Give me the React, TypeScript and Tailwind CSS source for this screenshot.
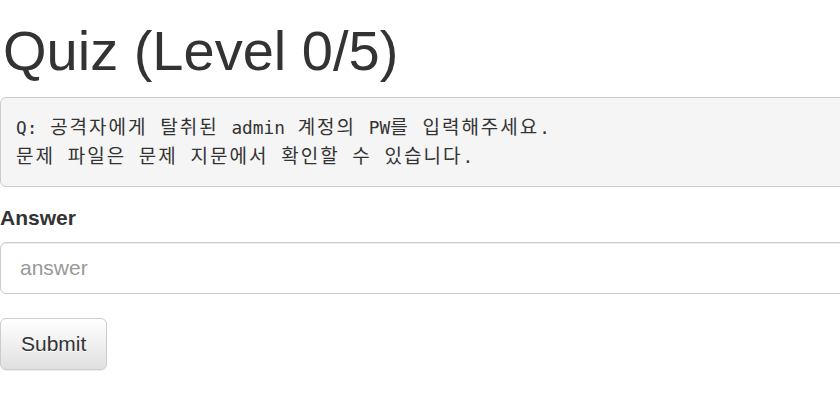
import type { ReactNode } from "react"

function Ko({ children }: { children: ReactNode }) {
  return (
    <span className="font-['Noto_Sans_CJK_KR','Noto_Sans',sans-serif] text-[19px] leading-none tracking-[2px]">
      {children}
    </span>
  )
}

export default function App() {
  return (
    <div className="h-[401px] w-[840px] overflow-hidden bg-white font-['Liberation_Sans',Arial,sans-serif] text-[#333]">
      <div className="w-[1140px] pt-[21px]">
        <h1 className="mb-[16px] pl-[3px] text-[56px] font-normal leading-[60px]">Quiz (Level 0/5)</h1>

        <pre className="mb-[16px] rounded-[6px] border border-[#ccc] bg-[#f5f5f5] px-[15px] py-[15px] font-['DejaVu_Sans_Mono',monospace] text-[17.8px] leading-[29px] text-[#333] [word-spacing:2px]">
          Q: <Ko>공격자에게</Ko> <Ko>탈취된</Ko> admin <Ko>계정의</Ko> PW<Ko>를</Ko> <Ko>입력해주세요</Ko>.{"\n"}
          <Ko>문제</Ko> <Ko>파일은</Ko> <Ko>문제</Ko> <Ko>지문에서</Ko> <Ko>확인할</Ko> <Ko>수</Ko> <Ko>있습니다</Ko>.
        </pre>

        <form className="flex flex-col" onSubmit={(e) => e.preventDefault()}>
          <div className="mb-[24px] flex flex-col">
            <label className="mb-[9px] text-[21px] font-bold leading-[30px]">Answer</label>
            <input
              type="text"
              placeholder="answer"
              className="h-[52px] w-full rounded-[6px] border border-[#ccc] bg-white px-[19px] text-[21px] text-[#555] shadow-[inset_0_1px_1px_rgba(0,0,0,0.075)] outline-none placeholder:text-[#999]"
            />
          </div>
          <div>
            <button
              type="submit"
              className="h-[52px] rounded-[6px] border border-[#ccc] bg-[linear-gradient(to_bottom,#fff_0%,#e0e0e0_100%)] px-[20px] text-[21px] text-[#333] shadow-[inset_0_1px_0_rgba(255,255,255,0.15),0_1px_1px_rgba(0,0,0,0.075)] [text-shadow:0_1px_0_#fff]"
            >
              Submit
            </button>
          </div>
        </form>
      </div>
    </div>
  )
}
